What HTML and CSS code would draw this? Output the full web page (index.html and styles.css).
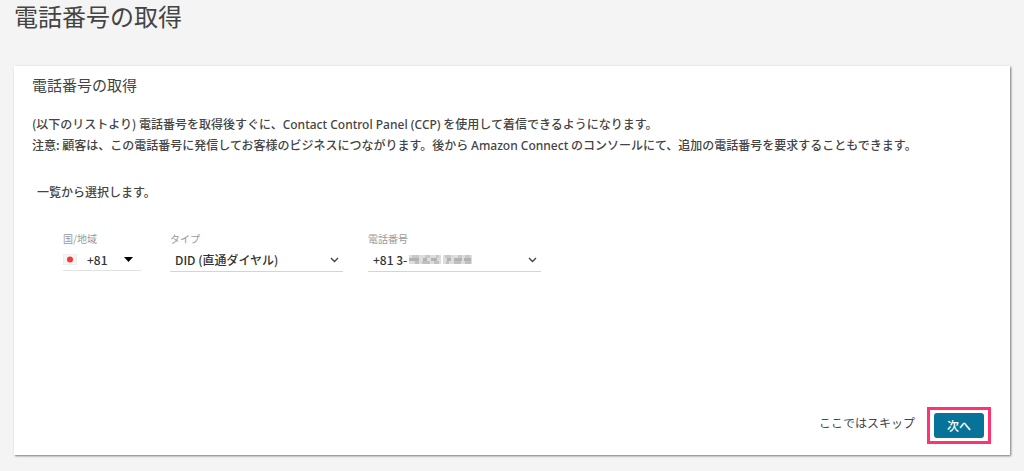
FILE: index.html
```html
<!DOCTYPE html>
<html lang="ja">
<head>
    <meta charset="utf-8">
    <title>電話番号の取得</title>
    <link rel="stylesheet" href="styles.css">
</head>
<body>
    <h1>電話番号の取得</h1>
    <div class="panel">
        <h2>電話番号の取得</h2>
        <p class="description">
            (以下のリストより) 電話番号を取得後すぐに、<span class="latin">Contact Control Panel (CCP)</span> を使用して着信できるようになります。<br>
            注意: 顧客は、この電話番号に発信してお客様のビジネスにつながります。後から <span class="latin">Amazon Connect</span> のコンソールにて、追加の電話番号を要求することもできます。
        </p>
        <p class="prompt">一覧から選択します。</p>
        <form class="number-form">
            <div class="field country">
                <label for="country">国/地域</label>
                <div class="select-box">
                    <svg class="flag" width="14" height="11" viewBox="0 0 14 11">
                        <rect x="0.5" y="0.5" width="13" height="10" fill="#f5f5f5" stroke="#eee"/>
                        <circle cx="7" cy="5.5" r="3" fill="#fb3535"/>
                    </svg>
                    <select id="country">
                        <option>+81</option>
                    </select>
                    <svg class="caret" width="9" height="5" viewBox="0 0 9 5">
                        <path d="M0 0h9L4.500 5z" fill="#000"/>
                    </svg>
                </div>
            </div>
            <div class="field">
                <label for="type">タイプ</label>
                <div class="select-box">
                    <select id="type">
                        <option>DID (直通ダイヤル)</option>
                    </select>
                    <svg class="chevron" width="9" height="6" viewBox="0 0 9 6">
                        <path d="M1 1l3.500 3.500L8 1" fill="none" stroke="#444" stroke-width="1.400"/>
                    </svg>
                </div>
            </div>
            <div class="field">
                <label for="phone">電話番号</label>
                <div class="select-box">
                    <select id="phone">
                        <option>+81 3-</option>
                    </select>
                    <svg class="mask" width="65" height="11" viewBox="0 0 65 11">
                        <path d="M0 1h32v9H0zM34 1h29v9H34z" fill="#ddd"/>
                        <path d="M3 1h7v3H3zM16 1h5v3h-5zM27 1h3v3h-3zM36 1h6v3h-6zM49 1h4v3h-4zM56 1h5v3h-5z" fill="#c8c8c8"/>
                        <path d="M0 4h10v3H0zM14 4h4v3h-4zM22 4h6v3h-6zM38 4h4v3h-4zM45 4h8v3h-8zM55 4h7v3h-7z" fill="#b2b2b2"/>
                        <path d="M6 7h4v3H6zM13 7h8v3h-8zM25 7h5v3h-5zM37 7h3v3h-3zM45 7h7v3h-7zM56 7h6v3h-6z" fill="#c0c0c0"/>
                    </svg>
                    <svg class="chevron" width="9" height="6" viewBox="0 0 9 6">
                        <path d="M1 1l3.500 3.500L8 1" fill="none" stroke="#444" stroke-width="1.400"/>
                    </svg>
                </div>
            </div>
        </form>
        <div class="actions">
            <a class="skip" href="#">ここではスキップ</a>
            <div class="highlight">
                <button type="button">次へ</button>
            </div>
        </div>
    </div>
</body>
</html>
```
FILE: styles.css
```css
* {
    box-sizing: border-box;
}

body {
    margin: 0;
    padding: 0 14px 14px;
    background-color: #f4f4f4;
    color: #444;
    font-family: "Noto Sans CJK JP", sans-serif;
    font-size: 12px;
    line-height: 21px;
}

h1 {
    margin: 0 0 34px;
    font-size: 24px;
    font-weight: normal;
    line-height: 32px;
}

.panel {
    display: flex;
    flex-direction: column;
    min-height: 389px;
    padding: 8px 19px 11px 18px;
    background-color: #fff;
    box-shadow: 1px 1px 2px 0 #777;
}

h2 {
    margin: 0 0 17px;
    font-size: 15px;
    font-weight: normal;
    line-height: 22px;
}

.description {
    margin: 0;
    font-weight: 500;
}

.latin {
    font-family: "Noto Sans", sans-serif;
    line-height: 1;
}

.prompt {
    margin: 26px 0 0 5px;
    font-weight: 500;
}

.number-form {
    display: flex;
    gap: 25px;
    margin: 28px 0 0 31px;
}

.field {
    width: 173px;
}

.country {
    width: 78px;
    margin-right: 4px;
}

label {
    display: block;
    color: #999;
    font-size: 10px;
    line-height: 18px;
}

.select-box {
    display: flex;
    align-items: center;
    position: relative;
    height: 24px;
    border-bottom: 1px solid #d4d4d4;
}

.country .select-box {
    height: 23px;
    border-color: #e2e2e2;
}

select {
    flex: 1;
    min-width: 0;
    height: 22px;
    padding: 0 5px;
    appearance: none;
    border: none;
    background: transparent;
    color: #333;
    font: inherit;
    font-weight: 500;
}

.chevron {
    margin-right: 4px;
}

.caret {
    margin-right: 8px;
}

.country select {
    padding: 0 10px;
}

.mask {
    position: absolute;
    left: 41px;
    top: 6px;
}

.actions {
    display: flex;
    align-items: flex-start;
    justify-content: flex-end;
    gap: 12px;
    margin-top: auto;
}

.skip {
    padding-top: 5px;
    color: #444;
    text-decoration: none;
}

.highlight {
    padding: 3px 4px;
    border: 3px solid #ff3370;
}

button {
    display: block;
    width: 50px;
    height: 25px;
    padding: 0;
    border: none;
    border-radius: 3px;
    background-color: #077398;
    color: #fff;
    font: inherit;
    font-weight: 500;
}
```
